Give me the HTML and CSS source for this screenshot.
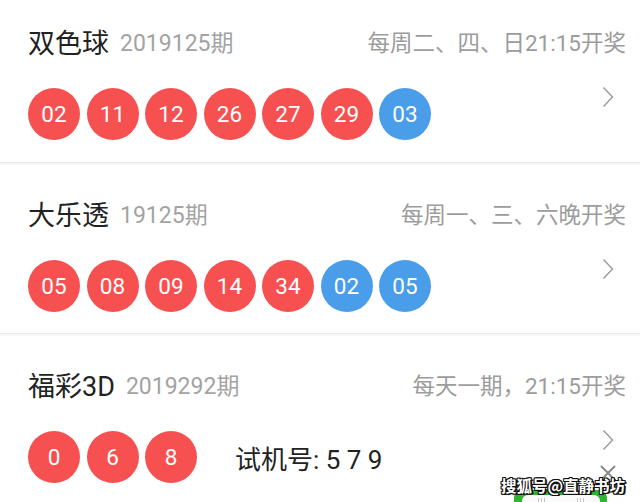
FILE: index.html
```html
<!DOCTYPE html>
<html lang="zh-CN">
<head>
<meta charset="utf-8">
<link rel="stylesheet" href="styles.css">
</head>
<body>
<div class="list">
  <div class="item first">
    <div class="head">
      <span class="name">双色球</span>
      <span class="issue">2019125期</span>
      <span class="when">每周二、四、日21:15开奖</span>
    </div>
    <div class="row">
      <div class="balls">
        <span class="ball red">02</span>
        <span class="ball red">11</span>
        <span class="ball red">12</span>
        <span class="ball red">26</span>
        <span class="ball red">27</span>
        <span class="ball red">29</span>
        <span class="ball blue">03</span>
      </div>
      <svg class="chev" width="12" height="22" viewBox="0 0 12 22"><path d="M1.5 1.5 L10.5 11 L1.5 20.5" fill="none" stroke="#9a9a9a" stroke-width="1.4"/></svg>
    </div>
  </div>
  <div class="item">
    <div class="head">
      <span class="name">大乐透</span>
      <span class="issue">19125期</span>
      <span class="when">每周一、三、六晚开奖</span>
    </div>
    <div class="row">
      <div class="balls">
        <span class="ball red">05</span>
        <span class="ball red">08</span>
        <span class="ball red">09</span>
        <span class="ball red">14</span>
        <span class="ball red">34</span>
        <span class="ball blue">02</span>
        <span class="ball blue">05</span>
      </div>
      <svg class="chev" width="12" height="22" viewBox="0 0 12 22"><path d="M1.5 1.5 L10.5 11 L1.5 20.5" fill="none" stroke="#9a9a9a" stroke-width="1.4"/></svg>
    </div>
  </div>
  <div class="item last">
    <div class="head">
      <span class="name">福彩3D</span>
      <span class="issue">2019292期</span>
      <span class="when">每天一期，21:15开奖</span>
    </div>
    <div class="row">
      <div class="balls">
        <span class="ball red">0</span>
        <span class="ball red">6</span>
        <span class="ball red">8</span>
      </div>
      <span class="trial">试机号: 5 7 9</span>
      <svg class="chev" width="12" height="22" viewBox="0 0 12 22"><path d="M1.5 1.5 L10.5 11 L1.5 20.5" fill="none" stroke="#9a9a9a" stroke-width="1.4"/></svg>
    </div>
  </div>
</div>
<div class="overlay">
  <svg class="close" width="18" height="18" viewBox="0 0 18 18"><path d="M2 2 L16 16 M16 2 L2 16" stroke="#8a8a8a" stroke-width="2" fill="none"/></svg>
  <div class="green"><div class="inner"><i></i><i></i><i></i><b></b><i></i><i></i><i></i></div></div>
  <div class="mark">搜狐号@直静书坊</div>
</div>
</body>
</html>
```
FILE: styles.css
```css
html, body {
  margin: 0;
  padding: 0;
  background: #ffffff;
}
body {
  width: 640px;
  height: 502px;
  overflow: hidden;
  position: relative;
  font-family: Roboto, "Noto Sans CJK SC", sans-serif;
}
.list {
  display: flex;
  flex-direction: column;
}
.item {
  padding: 35px 14px 21px 28px;
  border-bottom: 1px solid #e9e9e9;
  box-shadow: 0 2px 0 #f7f7f7;
  display: flex;
  flex-direction: column;
  gap: 32px;
}
.item.first {
  padding-top: 26px;
  padding-bottom: 22px;
}
.item.last {
  border-bottom: none;
  box-shadow: none;
}
.head {
  display: flex;
  align-items: center;
  height: 30px;
}
.name {
  font-size: 27px;
  color: #222222;
}
.issue {
  font-size: 23px;
  color: #a3a3a3;
  margin-left: 11px;
}
.when {
  font-size: 22.5px;
  color: #9c9c9c;
  margin-left: auto;
}
.row {
  display: flex;
  align-items: center;
  height: 52px;
}
.balls {
  display: flex;
  gap: 6.5px;
}
.ball {
  width: 52px;
  height: 52px;
  border-radius: 50%;
  display: flex;
  align-items: center;
  justify-content: center;
  color: #ffffff;
  font-size: 22.5px;
}
.ball.red {
  background: #f65150;
}
.ball.blue {
  background: #4a9de9;
}
.trial {
  font-size: 26px;
  color: #222222;
  margin-left: 38px;
}
.chev {
  margin-left: auto;
  margin-right: 12px;
  margin-bottom: 34px;
}
.overlay .close {
  position: absolute;
  left: 599px;
  top: 464px;
}
.overlay .green {
  position: absolute;
  left: 514px;
  top: 490px;
  width: 93px;
  height: 30px;
  background: #2fb52f;
  border-radius: 8px;
  display: flex;
  justify-content: center;
}
.overlay .inner {
  margin-top: 5px;
  width: 78px;
  height: 24px;
  background: #fbfbfb;
  border-radius: 6px;
  display: flex;
  justify-content: center;
  gap: 2px;
  padding-top: 3px;
  box-sizing: border-box;
}
.overlay .inner i {
  width: 1px;
  height: 6px;
  background: #c4c4c4;
}
.overlay .inner b {
  width: 28px;
}
.overlay .mark {
  position: absolute;
  left: 501px;
  top: 474px;
  font-size: 15.5px;
  line-height: 22px;
  font-weight: bold;
  color: #ffffff;
  font-family: "Noto Sans CJK SC", sans-serif;
  text-shadow: -1px -1px 0 #111, 1px -1px 0 #111, -1px 1px 0 #111, 1px 1px 0 #111, 0 1px 0 #111, 0 -1px 0 #111, 1px 0 0 #111, -1px 0 0 #111, 2px 1px 0 #111;
  white-space: nowrap;
}
```
